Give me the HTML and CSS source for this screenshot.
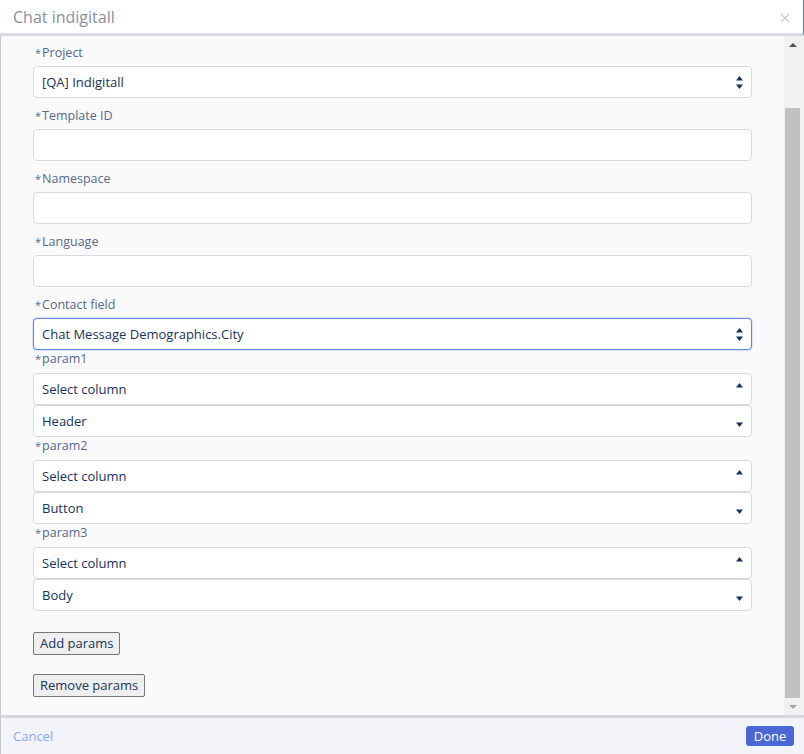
FILE: index.html
```html
<!DOCTYPE html>
<html lang="en">
<head>
<meta charset="utf-8">
<title>Chat indigitall</title>
<link rel="stylesheet" href="styles.css">
</head>
<body>
<div class="modal">
  <header class="modal-header">
    <h1 class="title">Chat indigitall</h1>
    <button class="close" aria-label="Close">
      <svg width="10" height="10" viewBox="0 0 10 10"><path d="M1 1L9 9M9 1L1 9" stroke="#c9c9c9" stroke-width="1.2" fill="none"/></svg>
    </button>
  </header>
  <div class="modal-body">
    <form class="form">
      <div class="field">
        <label class="label"><span class="req">*</span>Project</label>
        <div class="control">
          <span>[QA] Indigitall</span>
          <svg class="arrows" width="7" height="13" viewBox="0 0 7 13"><path d="M3.5 0L7 4.5H0Z M0 8.5H7L3.5 13Z" fill="#16325c"/></svg>
        </div>
      </div>
      <div class="field">
        <label class="label"><span class="req">*</span>Template ID</label>
        <div class="control"></div>
      </div>
      <div class="field">
        <label class="label"><span class="req">*</span>Namespace</label>
        <div class="control"></div>
      </div>
      <div class="field">
        <label class="label"><span class="req">*</span>Language</label>
        <div class="control"></div>
      </div>
      <div class="field field-last">
        <label class="label"><span class="req">*</span>Contact field</label>
        <div class="control focused">
          <span>Chat Message Demographics.City</span>
          <svg class="arrows" width="7" height="13" viewBox="0 0 7 13"><path d="M3.5 0L7 4.5H0Z M0 8.5H7L3.5 13Z" fill="#16325c"/></svg>
        </div>
      </div>

      <div class="param">
        <label class="label param-label"><span class="req">*</span>param1</label>
        <div class="control">
          <span>Select column</span>
          <svg class="arrow-up" width="7" height="5" viewBox="0 0 7 5"><path d="M3.5 0L7 4.5H0Z" fill="#16325c"/></svg>
        </div>
        <div class="control">
          <span>Header</span>
          <svg class="arrow-down" width="7" height="5" viewBox="0 0 7 5"><path d="M0 0.5H7L3.5 5Z" fill="#16325c"/></svg>
        </div>
      </div>
      <div class="param">
        <label class="label param-label"><span class="req">*</span>param2</label>
        <div class="control">
          <span>Select column</span>
          <svg class="arrow-up" width="7" height="5" viewBox="0 0 7 5"><path d="M3.5 0L7 4.5H0Z" fill="#16325c"/></svg>
        </div>
        <div class="control">
          <span>Button</span>
          <svg class="arrow-down" width="7" height="5" viewBox="0 0 7 5"><path d="M0 0.5H7L3.5 5Z" fill="#16325c"/></svg>
        </div>
      </div>
      <div class="param">
        <label class="label param-label"><span class="req">*</span>param3</label>
        <div class="control">
          <span>Select column</span>
          <svg class="arrow-up" width="7" height="5" viewBox="0 0 7 5"><path d="M3.5 0L7 4.5H0Z" fill="#16325c"/></svg>
        </div>
        <div class="control">
          <span>Body</span>
          <svg class="arrow-down" width="7" height="5" viewBox="0 0 7 5"><path d="M0 0.5H7L3.5 5Z" fill="#16325c"/></svg>
        </div>
      </div>

      <div class="actions">
        <button type="button" class="btn">Add params</button>
        <button type="button" class="btn">Remove params</button>
      </div>
    </form>
    <div class="scrollbar">
      <div class="sb-btn sb-up"><svg width="8" height="4" viewBox="0 0 8 4"><path d="M4 0L8 4H0Z" fill="#505050"/></svg></div>
      <div class="sb-track"><div class="sb-thumb"></div></div>
      <div class="sb-btn sb-down"><svg width="8" height="4" viewBox="0 0 8 4"><path d="M0 0H8L4 4Z" fill="#a3a3a3"/></svg></div>
    </div>
  </div>
  <footer class="modal-footer">
    <a class="cancel" href="#">Cancel</a>
    <button type="button" class="done">Done</button>
  </footer>
</div>
</body>
</html>
```
FILE: styles.css
```css
* { box-sizing: border-box; }
html, body { margin: 0; padding: 0; }
body {
  width: 804px;
  height: 754px;
  overflow: hidden;
  background: #ffffff;
  font-family: "Open Sans", "Noto Sans", sans-serif;
  font-size: 13px;
  color: #16325c;
}
.modal {
  display: flex;
  flex-direction: column;
  height: 754px;
  width: 804px;
}
.modal-header {
  height: 36px;
  flex: none;
  display: flex;
  align-items: center;
  justify-content: space-between;
  background: #ffffff;
  border-bottom: 3px solid #d8dae1;
  border-right: 1px solid #5b78c7;
  padding: 0 12px 0 13px;
}
.title {
  margin: 0;
  font-size: 16px;
  font-weight: 400;
  color: #8a909b;
  line-height: 20px;
}
.close {
  border: 0;
  background: none;
  padding: 0;
  width: 12px;
  height: 12px;
  display: flex;
  align-items: center;
  justify-content: center;
  margin-top: 2px;
}
.modal-body {
  flex: 1;
  display: flex;
  min-height: 0;
  background: #fafafb;
  border-left: 1px solid #c6c8cf;
  border-right: 3px solid #f3f3f4;
}
.form {
  flex: 1;
  margin: 0;
  padding: 8px 32px 0 32px;
}
.field { margin-bottom: 9px; }
.field-last { margin-bottom: 0; }
.label {
  display: block;
  height: 18px;
  line-height: 18px;
  margin: 0 0 4px 2px;
  font-size: 12.5px;
  color: #54698d;
}
.param-label { margin-bottom: 5px; }
.req {
  color: #54698d;
  margin-right: 1px;
  font-size: 11px;
}
.control {
  height: 32px;
  background: #ffffff;
  border: 1px solid #d8dae2;
  border-radius: 4px;
  display: flex;
  align-items: center;
  justify-content: space-between;
  padding: 0 8px 0 8px;
  font-size: 13px;
  color: #16325c;
}
.focused {
  border-color: #5f84e6;
  box-shadow: 0 0 2px #93adf0;
}
.arrows { flex: none; }
.arrow-up { flex: none; align-self: flex-start; margin-top: 9px; }
.arrow-down { flex: none; align-self: flex-end; margin-bottom: 9px; }
.actions {
  display: flex;
  flex-direction: column;
  align-items: flex-start;
  gap: 19px;
  padding-top: 21px;
}
.btn {
  font-family: inherit;
  font-size: 13px;
  color: #16325c;
  background: #efefef;
  border: 1px solid #767676;
  border-radius: 2px;
  height: 23px;
  padding: 0 6px;
  line-height: 19px;
}
.scrollbar {
  width: 17px;
  flex: none;
  display: flex;
  flex-direction: column;
  background: #f1f1f1;
}
.sb-btn {
  height: 17px;
  display: flex;
  align-items: center;
  justify-content: center;
}
.sb-up { align-items: flex-start; padding-top: 7px; height: 72px; }
.sb-track { flex: 1; padding: 0 1px; }
.sb-thumb {
  height: 100%;
  background: #c1c1c1;
}
.sb-down { height: 17px; padding-top: 0; }
.modal-footer {
  height: 39px;
  flex: none;
  display: flex;
  align-items: center;
  justify-content: space-between;
  background: #f3f4f9;
  border-top: 3px solid #d6d7de;
  border-left: 1px solid #c6c8cf;
  padding: 0 10px 0 12px;
}
.cancel {
  color: #8ea6ee;
  text-decoration: none;
  font-size: 13px;
}
.done {
  font-family: inherit;
  font-size: 13px;
  color: #ffffff;
  background: #4a67d3;
  border: 0;
  border-radius: 3px;
  width: 48px;
  height: 20px;
  padding: 0;
  line-height: 20px;
}
```
